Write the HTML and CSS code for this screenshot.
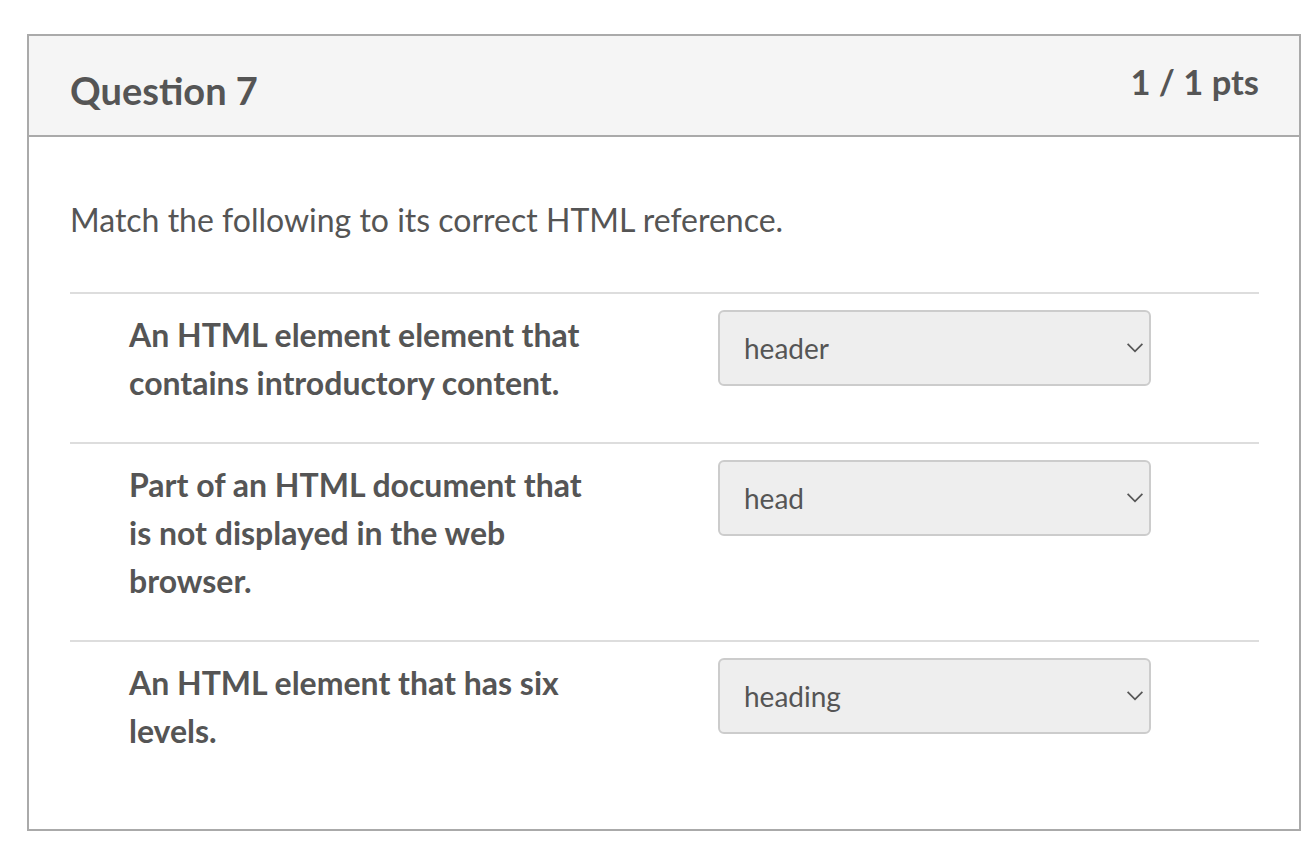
FILE: index.html
```html
<!DOCTYPE html>
<html lang="en">
<head>
<meta charset="utf-8">
<title>Question 7</title>
<link rel="stylesheet" href="styles.css">
</head>
<body>
<div class="question">
  <div class="q-header">
    <h2 class="q-title">Question 7</h2>
    <div class="q-points">1 / 1 pts</div>
  </div>
  <div class="q-body">
    <p class="q-text">Match the following to its correct HTML reference.</p>
    <div class="answers">
      <div class="answer">
        <div class="answer-label">An HTML element element that contains introductory content.</div>
        <div class="select">
          <span class="select-value">header</span>
          <svg class="chevron" width="16" height="10" viewBox="0 0 16 10"><polyline points="0.6,0.8 8,8.4 15.4,0.8" fill="none" stroke="#555" stroke-width="1.7"/></svg>
        </div>
      </div>
      <div class="answer">
        <div class="answer-label">Part of an HTML document that is not displayed in the web browser.</div>
        <div class="select">
          <span class="select-value">head</span>
          <svg class="chevron" width="16" height="10" viewBox="0 0 16 10"><polyline points="0.6,0.8 8,8.4 15.4,0.8" fill="none" stroke="#555" stroke-width="1.7"/></svg>
        </div>
      </div>
      <div class="answer">
        <div class="answer-label">An HTML element that has six levels.</div>
        <div class="select">
          <span class="select-value">heading</span>
          <svg class="chevron" width="16" height="10" viewBox="0 0 16 10"><polyline points="0.6,0.8 8,8.4 15.4,0.8" fill="none" stroke="#555" stroke-width="1.7"/></svg>
        </div>
      </div>
    </div>
  </div>
</div>
</body>
</html>
```

FILE: styles.css
```css
* { box-sizing: border-box; }

body {
  margin: 0;
  padding: 34px 0 0 27px;
  background: #fff;
  font-family: Lato, "Noto Sans", sans-serif;
  color: #555555;
}

.question {
  width: 1274px;
  height: 797px;
  border: 2px solid #aaaaaa;
  display: flex;
  flex-direction: column;
}

.q-header {
  height: 101px;
  background: #f5f5f5;
  border-bottom: 2px solid #aaaaaa;
  display: flex;
  justify-content: space-between;
  align-items: flex-start;
  padding: 0 40px 0 41px;
}

.q-title {
  margin: 0;
  font-size: 38px;
  font-weight: 700;
  line-height: 44px;
  padding-top: 32px;
}

.q-points {
  font-size: 34.5px;
  font-weight: 700;
  line-height: 40px;
  padding-top: 26px;
}

.q-body {
  padding: 0 40px 0 41px;
}

.q-text {
  margin: 0;
  padding-top: 59px;
  font-size: 32px;
  line-height: 48px;
  padding-bottom: 48px;
  border-bottom: 2px solid #dddddd;
}

.answer {
  display: flex;
  align-items: flex-start;
  padding: 17px 0 35px 59px;
  border-bottom: 2px solid #dddddd;
}

.answer:last-child {
  border-bottom: none;
}

.answer-label {
  width: 470px;
  font-size: 32px;
  font-weight: 700;
  line-height: 48px;
}

.select {
  margin-left: 119px;
  margin-top: -1px;
  width: 433px;
  height: 76px;
  background: #eeeeee;
  border: 2px solid #cccccc;
  border-radius: 6px;
  display: flex;
  align-items: center;
  justify-content: space-between;
  padding: 0 6px 0 24px;
}

.select-value {
  font-size: 28px;
  line-height: 40px;
}

.chevron {
  display: block;
}
```
